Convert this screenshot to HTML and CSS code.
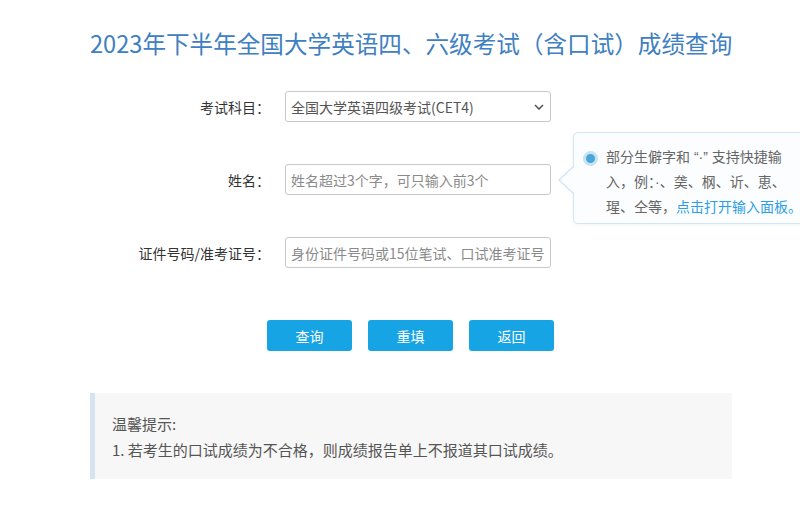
FILE: index.html
```html
<!DOCTYPE html>
<html lang="zh-CN">
<head>
<meta charset="utf-8">
<title>成绩查询</title>
<link rel="stylesheet" href="styles.css">
</head>
<body>
<div class="page">
  <h1 class="title">2023年下半年全国大学英语四、六级考试（含口试）成绩查询</h1>
  <form class="form">
    <div class="row">
      <label class="label">考试科目：</label>
      <div class="field select">
        <span class="select-text">全国大学英语四级考试(CET4)</span>
        <svg class="chevron" width="10" height="6" viewBox="0 0 10 6"><path d="M1 1 L5 5 L9 1" fill="none" stroke="#555" stroke-width="1.6"/></svg>
      </div>
    </div>
    <div class="row row-name">
      <label class="label">姓名：</label>
      <div class="field input"><span class="placeholder">姓名超过3个字，可只输入前3个</span></div>
      <div class="tip">
        <span class="tip-arrow"></span>
        <span class="radio"></span>
        <p class="tip-text">部分生僻字和 “·” 支持快捷输<br>入，例：·、䶮、㭎、䜣、恵、<br>瑆、仝等，<a class="tip-link">点击打开输入面板。</a></p>
      </div>
    </div>
    <div class="row">
      <label class="label">证件号码/准考证号：</label>
      <div class="field input"><span class="placeholder">身份证件号码或15位笔试、口试准考证号</span></div>
    </div>
    <div class="actions">
      <button type="button" class="btn">查询</button>
      <button type="button" class="btn">重填</button>
      <button type="button" class="btn">返回</button>
    </div>
  </form>
  <div class="notice">
    <p class="notice-line">温馨提示:</p>
    <p class="notice-line">1. 若考生的口试成绩为不合格，则成绩报告单上不报道其口试成绩。</p>
  </div>
</div>
</body>
</html>
```
FILE: styles.css
```css
html, body {
  overflow-x: hidden;
}
body {
  margin: 0;
  background: #fff;
  font-family: "Noto Sans CJK SC", "Microsoft YaHei", "Noto Sans", sans-serif;
  font-size: 14px;
  color: #333;
}
.page {
  width: 642px;
  margin-left: 90px;
  padding-top: 27px;
}
.title {
  margin: 0;
  font-size: 23.6px;
  line-height: 32px;
  font-weight: normal;
  color: #3f80c2;
  text-align: center;
  white-space: nowrap;
}
.form {
  margin-top: 32px;
}
.row {
  display: flex;
  align-items: center;
  height: 31px;
  margin-bottom: 42px;
  position: relative;
}
.label {
  width: 180px;
  text-align: right;
  color: #333;
  margin-right: 15px;
  white-space: nowrap;
}
.field {
  box-sizing: border-box;
  width: 266px;
  height: 31px;
  border: 1px solid #c9c9c9;
  border-radius: 3px;
  display: flex;
  align-items: center;
  padding: 0 5px;
  overflow: hidden;
  white-space: nowrap;
  background: #fff;
}
.select {
  justify-content: space-between;
  padding-right: 6px;
}
.select-text {
  color: #555;
}
.placeholder {
  color: #8a8a8a;
}
.tip {
  position: absolute;
  left: 483px;
  top: -32px;
  width: 240px;
  height: 92px;
  box-sizing: border-box;
  border: 1px solid #d4e5f3;
  border-radius: 5px;
  background: #fbfdff;
  padding: 12px 0 0 9px;
  display: flex;
  align-items: flex-start;
  box-shadow: 0 1px 3px rgba(160, 190, 220, 0.15);
}
.tip-arrow {
  position: absolute;
  left: -16px;
  top: 32px;
  width: 0;
  height: 0;
  border-top: 15px solid transparent;
  border-bottom: 15px solid transparent;
  border-right: 16px solid #d4e5f3;
}
.tip-arrow::after {
  content: "";
  position: absolute;
  left: 2px;
  top: -14px;
  width: 0;
  height: 0;
  border-top: 14px solid transparent;
  border-bottom: 14px solid transparent;
  border-right: 15px solid #fbfdff;
}
.radio {
  flex: none;
  box-sizing: border-box;
  width: 15px;
  height: 15px;
  margin-top: 6px;
  border-radius: 50%;
  background: #4aa6d6;
  border: 3px solid #c4e3f3;
  margin-right: 8px;
}
.tip-text {
  margin: 0;
  font-family: "Liberation Sans", "Noto Sans CJK SC", sans-serif;
  font-size: 14px;
  line-height: 25px;
  color: #666;
  white-space: nowrap;
}
.tip-link {
  color: #2c9fe4;
}
.actions {
  display: flex;
  gap: 16px;
  margin-top: 52px;
  padding-left: 177px;
}
.btn {
  width: 85px;
  height: 31px;
  border: none;
  border-radius: 3px;
  background: #17a4e4;
  color: #fff;
  font-family: inherit;
  font-size: 14px;
  padding: 0;
}
.notice {
  margin-top: 42px;
  background: #f7f7f7;
  border-left: 5px solid #d5e3f1;
  padding: 18px 0 16px 17px;
}
.notice-line {
  margin: 0;
  line-height: 26px;
  color: #555;
  font-size: 15px;
}
```
